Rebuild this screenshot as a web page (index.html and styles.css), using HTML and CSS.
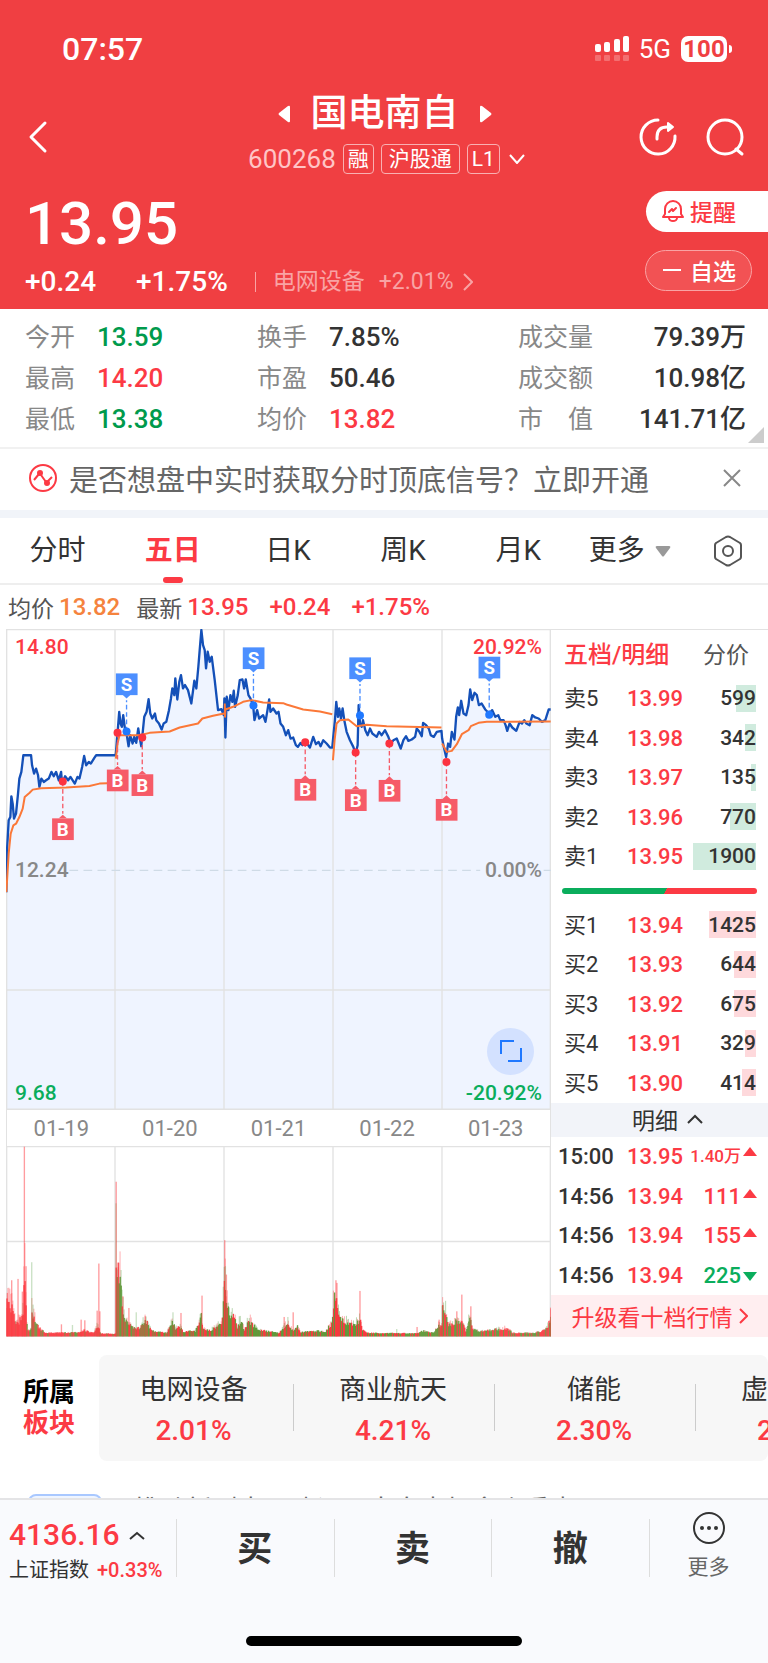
FILE: index.html
```html
<!DOCTYPE html>
<html lang="zh-CN">
<head>
    <meta charset="UTF-8">
    <meta name="viewport" content="width=device-width, initial-scale=1.0">
    <title>国电南自 600268</title>
    <link rel="stylesheet" href="styles.css">
</head>
<body>
    <header class="header">
        <div class="status-bar">
            <span class="time">07:57</span>
            <div class="status-icons">
                <svg width="34" height="26" viewBox="0 0 34 26" fill="#fff">
                    <rect x="0" y="8" width="6" height="8" rx="2"/>
                    <rect x="9" y="6" width="6" height="10" rx="2"/>
                    <rect x="19" y="3" width="6" height="13" rx="2"/>
                    <rect x="28" y="0" width="6" height="16" rx="2"/>
                    <g opacity=".25">
                        <rect x="0" y="19" width="6" height="6" rx="1"/>
                        <rect x="9" y="19" width="6" height="6" rx="1"/>
                        <rect x="19" y="19" width="6" height="6" rx="1"/>
                        <rect x="28" y="19" width="6" height="6" rx="1"/>
                    </g>
                </svg>
                <span class="network">5G</span>
                <span class="battery">100</span>
            </div>
        </div>

        <div class="title-bar">
            <button class="icon-btn back" aria-label="返回">
                <svg width="20" height="34" viewBox="0 0 20 34" fill="none" stroke="#fff" stroke-width="3" stroke-linecap="round" stroke-linejoin="round"><path d="M17 3L3 17l14 14"/></svg>
            </button>
            <div class="stock">
                <div class="stock-name">
                    <button class="icon-btn" aria-label="上一只">
                        <svg width="12" height="18" viewBox="0 0 12 18" fill="#fff"><path d="M10 1Q12 0 12 2v14q0 2-2 1L1 10Q0 9 1 8z"/></svg>
                    </button>
                    <h1>国电南自</h1>
                    <button class="icon-btn" aria-label="下一只">
                        <svg width="12" height="18" viewBox="0 0 12 18" fill="#fff"><path d="M2 1Q0 0 0 2v14q0 2 2 1l9-7q1-1 0-2z"/></svg>
                    </button>
                </div>
                <div class="stock-code">
                    <span class="code">600268</span>
                    <span class="tag">融</span>
                    <span class="tag">沪股通</span>
                    <span class="tag">L1</span>
                    <svg class="down" width="16" height="10" viewBox="0 0 16 10" fill="none" stroke="#fff" stroke-width="2"><path d="M1 1l7 8 7-8"/></svg>
                </div>
            </div>
            <div class="title-actions">
                <button class="icon-btn" aria-label="刷新">
                    <svg width="40" height="40" viewBox="0 0 40 40" fill="none" stroke="#fff" stroke-width="3" stroke-linecap="round" stroke-linejoin="round">
                        <path d="M20 3A17 17 0 1 0 37 19"/>
                        <path d="M19 22v-2q0-10 10-10h4"/>
                        <path d="M30 6l5 4-5 4z" fill="#fff" stroke-width="2"/>
                    </svg>
                </button>
                <button class="icon-btn" aria-label="搜索">
                    <svg width="40" height="40" viewBox="0 0 40 40" fill="none" stroke="#fff" stroke-width="3" stroke-linecap="round">
                        <circle cx="20" cy="20" r="17"/>
                        <path d="M31 32l6 5"/>
                    </svg>
                </button>
            </div>
        </div>

        <div class="price-bar">
            <div class="price-info">
                <div class="price">13.95</div>
                <div class="change">
                    <span>+0.24</span>
                    <span class="percent">+1.75%</span>
                    <a class="sector-link" href="#sectors">电网设备<span>+2.01%</span>
                        <svg width="10" height="18" viewBox="0 0 10 18" fill="none" stroke="currentColor" stroke-width="2"><path d="M1 1l8 8-8 8"/></svg>
                    </a>
                </div>
            </div>
            <div class="price-actions">
                <button class="remind">
                    <svg width="22" height="24" viewBox="0 0 22 24" fill="none" stroke="#fc3a44" stroke-width="2" stroke-linejoin="round" stroke-linecap="round">
                        <path d="M3 15v-5a8 8 0 0 1 16 0v5l2 3H1z"/>
                        <path d="M7 19a4 3 0 0 0 8 0M7 13l3-3 1 2 3-3"/>
                    </svg>
                    提醒
                </button>
                <button class="favorite"><i></i>自选</button>
            </div>
        </div>
    </header>

    <section class="stats">
        <dl>
            <div><dt>今开</dt><dd class="down-text">13.59</dd></div>
            <div><dt>最高</dt><dd class="up-text">14.20</dd></div>
            <div><dt>最低</dt><dd class="down-text">13.38</dd></div>
        </dl>
        <dl>
            <div><dt>换手</dt><dd>7.85%</dd></div>
            <div><dt>市盈</dt><dd>50.46</dd></div>
            <div><dt>均价</dt><dd class="up-text">13.82</dd></div>
        </dl>
        <dl class="wide">
            <div><dt>成交量</dt><dd>79.39万</dd></div>
            <div><dt>成交额</dt><dd>10.98亿</dd></div>
            <div><dt>市　值</dt><dd>141.71亿</dd></div>
        </dl>
    </section>

    <div class="notice">
        <svg width="28" height="28" viewBox="0 0 28 28" fill="none" stroke="#fc3a44" stroke-width="2">
            <circle cx="14" cy="14" r="13"/>
            <path d="M5 16l5-6M12 11l5 7M19 17l4-4"/>
            <circle cx="11" cy="9" r="2" fill="#fc3a44"/><circle cx="18" cy="19" r="2" fill="#fc3a44"/>
        </svg>
        <a href="#">是否想盘中实时获取分时顶底信号？立即开通</a>
        <button class="icon-btn" aria-label="关闭">
            <svg width="18" height="18" viewBox="0 0 18 18" stroke="#888" stroke-width="2"><path d="M1 1l16 16M17 1L1 17"/></svg>
        </button>
    </div>

    <nav class="tabs">
        <button>分时</button>
        <button class="active">五日</button>
        <button>日K</button>
        <button>周K</button>
        <button>月K</button>
        <button class="more">更多<svg width="16" height="12" viewBox="0 0 16 12" fill="#999"><path d="M2 1h12q2 0 1 2l-6 8q-1 1-2 0L1 3Q0 1 2 1z"/></svg></button>
        <button class="setting" aria-label="设置">
            <svg width="30" height="32" viewBox="0 0 30 32" fill="none" stroke="#555" stroke-width="2" stroke-linejoin="round">
                <path d="M13 2q2-1 4 0l10 6q1 1 1 2v12q0 1-1 2l-10 6q-2 1-4 0L3 24q-1-1-1-2V10q0-1 1-2z"/>
                <circle cx="15" cy="16" r="5"/>
            </svg>
        </button>
    </nav>

    <div class="quote-line">
        <span>均价</span><b class="avg">13.82</b>
        <span>最新</span><b>13.95</b><b>+0.24</b><b>+1.75%</b>
    </div>

    <main class="market">
        <section class="chart">
            <div class="price-chart">
                <svg id="priceChart" viewBox="0 0 1632 1440"></svg>
                <span class="label top-left up-text">14.80</span>
                <span class="label top-right up-text">20.92%</span>
                <span class="label mid-left">12.24</span>
                <span class="label mid-right">0.00%</span>
                <span class="label bottom-left green-text">9.68</span>
                <span class="label bottom-right green-text">-20.92%</span>
                <button class="fullscreen" aria-label="全屏">
                    <svg width="22" height="22" viewBox="0 0 22 22" fill="none" stroke="#1f78ff" stroke-width="2"><path d="M1 14V1h13M21 8v13H8"/></svg>
                </button>
            </div>
            <div class="dates">
                <span>01-19</span><span>01-20</span><span>01-21</span><span>01-22</span><span>01-23</span>
            </div>
            <svg id="volumeChart" viewBox="0 0 1632 573"></svg>
        </section>

        <aside class="order-book">
            <div class="book-tabs">
                <button class="active">五档/明细</button>
                <button>分价</button>
            </div>
            <table class="sell">
                <tr><th>卖5</th><td>13.99</td><td><i style="width:20px"></i><span>599</span></td></tr>
                <tr><th>卖4</th><td>13.98</td><td><i style="width:11px"></i><span>342</span></td></tr>
                <tr><th>卖3</th><td>13.97</td><td><i style="width:5px"></i><span>135</span></td></tr>
                <tr><th>卖2</th><td>13.96</td><td><i style="width:26px"></i><span>770</span></td></tr>
                <tr><th>卖1</th><td>13.95</td><td><i style="width:63px"></i><span>1900</span></td></tr>
            </table>
            <div class="ratio"><div></div></div>
            <table class="buy">
                <tr><th>买1</th><td>13.94</td><td><i style="width:47px"></i><span>1425</span></td></tr>
                <tr><th>买2</th><td>13.93</td><td><i style="width:22px"></i><span>644</span></td></tr>
                <tr><th>买3</th><td>13.92</td><td><i style="width:22px"></i><span>675</span></td></tr>
                <tr><th>买4</th><td>13.91</td><td><i style="width:11px"></i><span>329</span></td></tr>
                <tr><th>买5</th><td>13.90</td><td><i style="width:14px"></i><span>414</span></td></tr>
            </table>
            <button class="detail-title">明细
                <svg width="16" height="10" viewBox="0 0 16 10" fill="none" stroke="#333" stroke-width="2"><path d="M1 9l7-7 7 7"/></svg>
            </button>
            <table class="detail">
                <tr><th>15:00</th><td>13.95</td><td class="small">1.40万</td></tr>
                <tr><th>14:56</th><td>13.94</td><td>111</td></tr>
                <tr><th>14:56</th><td>13.94</td><td>155</td></tr>
                <tr><th>14:56</th><td>13.94</td><td class="fall">225</td></tr>
            </table>
            <a class="upgrade" href="#">升级看十档行情
                <svg width="9" height="16" viewBox="0 0 9 16" fill="none" stroke="#fc3a44" stroke-width="2"><path d="M1 1l7 7-7 7"/></svg>
            </a>
        </aside>
    </main>

    <section class="sectors" id="sectors">
        <h2>所属<span>板块</span></h2>
        <ul>
            <li><a href="#">电网设备<b>2.01%</b></a></li>
            <li><a href="#">商业航天<b>4.21%</b></a></li>
            <li><a href="#">储能<b>2.30%</b></a></li>
            <li><a href="#">虚拟电厂<b>2.16%</b></a></li>
        </ul>
    </section>

    <div class="news">
        <a href="#"><span class="news-tag"></span><span class="news-text">推动新型电网建设，南自中标多个重点项目</span></a>
    </div>

    <footer class="footer">
        <div class="trade-bar">
            <a class="index" href="#">
                <span class="index-value">4136.16
                    <svg width="16" height="9" viewBox="0 0 16 9" fill="none" stroke="#333" stroke-width="2"><path d="M1 8l7-6 7 6"/></svg>
                </span>
                <span class="index-name">上证指数<b>+0.33%</b></span>
            </a>
            <button>买</button>
            <button>卖</button>
            <button>撤</button>
            <button class="trade-more">
                <svg width="34" height="34" viewBox="0 0 34 34" fill="none" stroke="#333" stroke-width="2">
                    <circle cx="17" cy="17" r="15"/>
                    <g fill="#333" stroke="none"><circle cx="10" cy="17" r="2"/><circle cx="17" cy="17" r="2"/><circle cx="24" cy="17" r="2"/></g>
                </svg>
                更多
            </button>
        </div>
        <div class="home-bar"></div>
    </footer>

    <script src="chart.js"></script>
</body>
</html>
```
FILE: styles.css
```css
* {
    box-sizing: border-box;
}

body {
    margin: 0;
    background: #fff;
    color: #333;
    font-family: Roboto, "Noto Sans CJK SC", sans-serif;
    overflow-x: hidden;
}

h1, h2, ul, dl, dd {
    margin: 0;
    padding: 0;
}

button {
    padding: 0;
    border: none;
    background: none;
    color: inherit;
    font: inherit;
    cursor: pointer;
}

a {
    color: inherit;
    text-decoration: none;
}

svg {
    display: block;
    flex-shrink: 0;
}

.icon-btn {
    display: flex;
}

.up-text {
    color: #fc3a44;
}

.down-text {
    color: #009a4c;
}

.green-text {
    color: #0aad5c;
}

/* 顶部 */
.header {
    background: #f03f42;
    color: #fff;
    padding-bottom: 10px;
}

.status-bar {
    display: flex;
    justify-content: space-between;
    align-items: center;
    padding: 32px 36px 0 62px;
    height: 66px;
}

.time {
    font-size: 32px;
    font-weight: 500;
}

.status-icons {
    display: flex;
    align-items: center;
    gap: 10px;
}

.network {
    font-size: 26px;
    line-height: 30px;
}

.battery {
    position: relative;
    width: 46px;
    margin-right: 5px;
    border-radius: 7px;
    background: #fff;
    color: #f03f42;
    font-size: 24px;
    font-weight: 700;
    line-height: 26px;
    text-align: center;
}

.battery::after {
    content: "";
    position: absolute;
    right: -5px;
    top: 9px;
    width: 3px;
    height: 8px;
    border-radius: 0 4px 4px 0;
    background: #fff;
}

.title-bar {
    display: grid;
    grid-template-columns: 1fr auto 1fr;
    align-items: end;
    padding: 25px 23px 0 28px;
}

.title-actions {
    display: flex;
    justify-content: flex-end;
    gap: 27px;
    padding-bottom: 17px;
}

.back {
    padding-bottom: 20px;
}

.stock-name {
    display: flex;
    justify-content: center;
    align-items: center;
    gap: 21px;
    padding-right: 4px;
}

.stock-name h1 {
    font-size: 37px;
    font-weight: 500;
    line-height: 46px;
}

.stock-code {
    display: flex;
    align-items: center;
    justify-content: center;
    gap: 7px;
    margin-top: 7px;
}

.code {
    font-size: 26px;
    line-height: 30px;
    color: #ffc5c6;
}

.tag {
    padding: 0 4px;
    border: 1px solid #f9b0b2;
    border-radius: 4px;
    font-size: 21px;
    line-height: 28px;
}

.tag:nth-child(3) {
    padding: 0 7px;
}

.down {
    margin-left: 2px;
}

.price-bar {
    display: flex;
    justify-content: space-between;
    margin-top: 17px;
}

.price-info {
    padding-left: 25px;
}

.price {
    font-size: 60px;
    font-weight: 500;
    line-height: 66px;
}

.change {
    display: flex;
    align-items: center;
    margin-top: 8px;
    font-size: 28px;
    font-weight: 500;
    line-height: 34px;
}

.percent {
    margin-left: 40px;
}

.sector-link {
    display: flex;
    align-items: center;
    margin-left: 27px;
    padding-left: 18px;
    background: linear-gradient(#f9a3a4, #f9a3a4) left center / 1px 20px no-repeat;
    color: #f9a3a4;
    font-size: 23px;
    font-weight: 400;
}

.sector-link span {
    margin: 0 9px 0 14px;
}

.price-actions {
    display: flex;
    flex-direction: column;
    align-items: flex-end;
    gap: 18px;
}

.remind, .favorite {
    display: flex;
    align-items: center;
    height: 41px;
    padding-bottom: 1px;
    font-size: 23px;
    font-weight: 500;
}

.remind {
    gap: 6px;
    padding-left: 16px;
    padding-right: 32px;
    border-radius: 21px 0 0 21px;
    background: #fff;
    color: #fc3a44;
}

.favorite {
    gap: 9px;
    margin-right: 16px;
    padding-left: 17px;
    padding-right: 15px;
    border: 1px solid #f9a3a4;
    border-radius: 21px;
    background: #f25254;
}

.favorite i {
    width: 18px;
    height: 2px;
    background: #fff;
}

/* 行情数据 */
.stats {
    position: relative;
    display: grid;
    grid-template-columns: 232px 261px 1fr;
    padding: 8px 22px 7px 25px;
    border-bottom: 2px solid #f1f1f1;
}

.stats::after {
    content: "";
    position: absolute;
    right: 4px;
    bottom: 4px;
    border: 8px solid #ccc;
    border-top-color: transparent;
    border-left-color: transparent;
}

.stats dl div {
    display: flex;
    gap: 22px;
    line-height: 41px;
}

.stats dt {
    color: #888;
    font-size: 25px;
}

.stats dd {
    font-size: 26px;
    font-weight: 500;
}

.stats .wide div {
    justify-content: space-between;
}

.notice {
    display: flex;
    align-items: center;
    gap: 12px;
    padding: 0 27px 3px 29px;
    height: 69px;
    border-bottom: 8px solid #f1f4f9;
    color: #666;
    font-size: 29px;
}

.notice a {
    flex: 1;
}

/* 周期切换 */
.tabs {
    display: grid;
    grid-template-columns: repeat(5, 15%) 14% 1fr;
    align-items: center;
    justify-items: center;
    height: 67px;
    border-bottom: 2px solid #eee;
    font-size: 28px;
}

.tabs button {
    position: relative;
    line-height: 65px;
}

.tabs .active {
    color: #fc3a44;
    font-weight: 700;
}

.tabs .active::after {
    content: "";
    position: absolute;
    left: 50%;
    bottom: 0;
    width: 20px;
    height: 6px;
    margin-left: -10px;
    border-radius: 3px;
    background: #fc3a44;
}

.tabs .more {
    display: flex;
    align-items: center;
    gap: 10px;
}

.tabs .setting {
    padding-left: 4px;
}

.quote-line {
    display: flex;
    align-items: center;
    padding-left: 8px;
    height: 44px;
    font-size: 23px;
    color: #555;
}

.quote-line b {
    margin: 0 16px 0 5px;
    color: #fc3a44;
    font-size: 24px;
    font-weight: 500;
}

.quote-line .avg {
    color: #f5833e;
}

/* 走势图 */
.market {
    display: grid;
    grid-template-columns: 1fr 217px;
}

.chart {
    padding-left: 6px;
}

.chart svg {
    width: 100%;
}

.price-chart {
    position: relative;
}

.label {
    position: absolute;
    font-size: 21px;
    line-height: 26px;
    font-weight: 500;
}

.top-left, .bottom-left, .mid-left {
    left: 9px;
}

.top-right, .bottom-right, .mid-right {
    right: 9px;
}

.top-left, .top-right {
    top: 5px;
}

.bottom-left, .bottom-right {
    bottom: 4px;
}

.mid-left, .mid-right {
    top: 50%;
    margin-top: -12px;
    color: #888;
}

.price-chart .fullscreen {
    position: absolute;
    right: 17px;
    bottom: 35px;
    display: flex;
    align-items: center;
    justify-content: center;
    width: 47px;
    height: 47px;
    border-radius: 50%;
    background: #d3e1ff;
}

.fullscreen svg {
    width: 22px;
}

.dates {
    display: grid;
    grid-template-columns: repeat(5, 1fr);
    padding-top: 2px;
    border: solid #e2e2e2;
    border-width: 0 1px;
    color: #888;
    font-size: 22px;
    line-height: 34px;
    text-align: center;
}

.grid {
    fill: none;
    stroke: #e2e2e2;
    stroke-width: 4;
}

.base-line {
    stroke: #cfdbe6;
    stroke-width: 4;
    stroke-dasharray: 26 16;
}

.area {
    fill: #eff4ff;
}

.price-path, .avg-path {
    fill: none;
    stroke: #1450b8;
    stroke-width: 7;
    stroke-linejoin: round;
}

.avg-path {
    stroke: #fb7838;
    stroke-width: 6;
}

.marker text {
    fill: #fff;
    font-size: 56px;
    font-weight: 700;
    text-anchor: middle;
}

.marker line {
    stroke-width: 4;
    stroke-dasharray: 14 8;
}

.marker.b {
    fill: #f65b68;
}

.marker.s {
    fill: #4c8fff;
}

.marker.b line {
    stroke: #f65b68;
}

.marker.s line {
    stroke: #4c8fff;
}

.marker.b circle {
    fill: #fc3240;
}

.marker.s circle {
    fill: #1f78ff;
}

/* 五档盘口 */
.order-book {
    display: flex;
    flex-direction: column;
    border-top: 1px solid #e2e2e2;
}

.book-tabs {
    display: flex;
    align-items: center;
    justify-content: space-between;
    padding: 0 19px 4px 13px;
    height: 49px;
    color: #555;
    font-size: 23px;
}

.book-tabs .active {
    color: #fc3a44;
    font-size: 24px;
    font-weight: 500;
}

.order-book table {
    flex: 5 1 0;
    width: 100%;
    table-layout: fixed;
    border-collapse: collapse;
}

.order-book .detail {
    flex-grow: 4;
}

.order-book th, .order-book td {
    padding: 0;
    font-size: 22px;
    font-weight: 500;
    line-height: 27px;
}

.order-book th {
    width: 76px;
    padding-left: 13px;
    font-weight: 400;
    text-align: left;
}

.order-book td {
    color: #fc3a44;
}

.order-book td:nth-child(2) {
    width: 56px;
}

.order-book td:last-child {
    position: relative;
    padding-right: 12px;
    color: #333;
    font-size: 21px;
    text-align: right;
}

td i {
    position: absolute;
    right: 12px;
    top: 50%;
    height: 27px;
    margin-top: -14px;
}

td span {
    position: relative;
}

.sell i {
    background: #d0ebde;
}

.buy i {
    background: #fed9dc;
}

.ratio {
    padding: 11px 11px 12px;
}

.ratio div {
    height: 6px;
    border-radius: 3px;
    background: linear-gradient(120deg, #0aad5c 53%, #fc3a44 53%);
}

.detail-title {
    display: flex;
    align-items: center;
    justify-content: center;
    gap: 9px;
    height: 34px;
    padding: 0 0 2px 16px;
    background: #f2f4f9;
    font-size: 23px;
}

.order-book .detail th {
    padding-left: 7px;
    font-weight: 500;
}

.order-book .detail td:last-child {
    padding-right: 11px;
    color: #fc3a44;
    font-size: 22px;
    white-space: nowrap;
}

.order-book .detail td.fall:last-child {
    color: #0aad5c;
}

.order-book .detail td.small:last-child {
    font-size: 17px;
}

.detail td:last-child::after {
    content: "";
    display: inline-block;
    margin-left: 2px;
    border: solid transparent;
    border-width: 0 7px 9px;
    border-bottom-color: currentColor;
    vertical-align: 6px;
}

.detail td.fall:last-child::after {
    border-width: 9px 7px 0;
    border-top-color: currentColor;
    vertical-align: 2px;
}

.upgrade {
    display: flex;
    align-items: center;
    justify-content: center;
    gap: 6px;
    height: 42px;
    background: #ffeef0;
    color: #fc3a44;
    font-size: 23px;
}

/* 所属板块 */
.sectors {
    display: flex;
    align-items: center;
    margin-top: 18px;
}

.sectors h2 {
    flex: 0 0 99px;
    padding-left: 23px;
    color: #000;
    font-size: 26px;
    font-weight: 700;
    line-height: 31px;
}

.sectors h2 span {
    display: block;
    color: #fc3a44;
}

.sectors ul {
    flex: 1;
    display: flex;
    min-width: 0;
    overflow: hidden;
    border-radius: 8px;
    background: #f7f7f7;
    list-style: none;
}

.sectors li {
    flex: 0 0 201px;
    padding: 15px 3px 10px 0;
    background: linear-gradient(#ccc, #ccc) right 29px / 1px 47px no-repeat;
    font-size: 27px;
    line-height: 40px;
    text-align: center;
}

.sectors li:first-child {
    flex-basis: 195px;
    padding-right: 6px;
}

.sectors b {
    display: block;
    color: #fc3a44;
    font-size: 28px;
    font-weight: 500;
    line-height: 41px;
}

.news {
    height: 37px;
    padding: 33px 28px 0;
    overflow: hidden;
}

.news a {
    display: flex;
    gap: 32px;
    color: #666;
    font-size: 26px;
    line-height: 33px;
}

.news-tag {
    width: 74px;
    height: 36px;
    border: 2px solid #a9c8ff;
    border-radius: 8px;
    background: #eff5ff;
}

/* 底部交易栏 */
.footer {
    padding-bottom: 17px;
    border-top: 2px solid #e4e4e6;
    background: #f9fafd;
}

.trade-bar {
    display: grid;
    grid-template-columns: 176px 1fr 1fr 1fr 119px;
    align-items: center;
    padding-top: 11px;
}

.trade-bar > button {
    height: 76px;
    padding-bottom: 8px;
    background: linear-gradient(#ddd, #ddd) left 8px / 1px 58px no-repeat;
    font-size: 35px;
    font-weight: 700;
}

.index {
    padding: 4px 0 0 9px;
}

.index-value {
    display: flex;
    align-items: center;
    gap: 9px;
    color: #fc3a44;
    font-size: 30px;
    font-weight: 500;
    line-height: 38px;
}

.index-name {
    display: block;
    font-size: 20px;
    line-height: 32px;
    white-space: nowrap;
}

.index-name b {
    margin-left: 8px;
    color: #fc3a44;
    font-weight: 500;
}

.trade-bar .trade-more {
    display: flex;
    flex-direction: column;
    align-items: center;
    gap: 4px;
    padding: 0 0 2px;
    color: #666;
    font-size: 21px;
    font-weight: 400;
    line-height: 36px;
}

.home-bar {
    width: 36%;
    height: 10px;
    margin: 49px auto 0;
    border-radius: 5px;
    background: #000;
}
```
FILE: chart.js
```js
const dayWidth = 326.4;

// 五日价格走势
const priceLine = '1,788 3,663 8,573 13,563 16,501 20,523 24,568 30,553 36,493 40,448 46,428 52,378 75,378 78,408 84,433 90,418 96,438 100,473 106,448 113,458 120,453 128,448 136,428 143,441 150,428 158,453 165,428 168,463 177,441 186,453 193,443 206,463 214,443 220,448 228,413 234,380 240,408 248,398 254,403 265,385 270,378 327,378 ' +
    '329,373 334,311 339,248 343,283 347,293 351,258 356,298 361,313 367,351 372,318 379,343 384,323 390,341 396,298 400,323 405,351 408,323 414,263 421,248 427,210 432,253 438,268 446,253 450,273 458,283 466,301 472,283 480,278 488,243 494,208 498,178 504,198 507,148 513,211 519,158 524,138 530,178 536,168 545,183 555,223 564,155 570,178 576,113 580,63 585,3 590,48 595,63 599,118 604,68 610,98 616,83 625,153 635,243 645,240 652,258 ' +
    '654,208 657,325 661,203 666,243 672,198 678,218 682,185 686,233 694,198 700,153 708,151 713,178 718,151 726,198 732,208 740,228 744,273 752,243 758,268 770,258 777,278 783,243 788,211 792,248 800,238 810,253 816,248 822,283 830,293 838,318 845,303 852,328 860,325 868,348 874,353 882,341 888,348 896,333 903,345 910,355 920,323 928,345 936,338 942,351 950,333 960,343 970,355 977,355 ' +
    '980,323 985,273 989,218 994,263 998,238 1003,268 1008,238 1013,273 1020,308 1030,333 1040,353 1047,373 1053,348 1056,228 1060,283 1065,293 1069,273 1076,303 1083,318 1090,298 1097,313 1110,323 1117,308 1125,318 1135,303 1145,323 1152,343 1160,333 1170,328 1182,358 1190,333 1198,321 1205,335 1215,331 1225,323 1230,298 1238,308 1245,321 1249,281 1258,288 1266,298 1272,318 1281,323 1290,308 1304,305 ' +
    '1306,328 1311,353 1318,383 1324,343 1330,353 1335,308 1343,331 1348,263 1353,235 1357,258 1363,215 1370,253 1378,258 1385,228 1390,181 1396,213 1403,191 1410,198 1416,228 1424,223 1435,241 1447,253 1456,243 1465,263 1474,258 1480,273 1490,273 1496,288 1501,305 1508,283 1516,295 1528,305 1538,278 1545,283 1552,273 1558,283 1568,288 1576,258 1585,265 1595,268 1605,278 1615,273 1625,241 1631,241';

// 每日均价线
const avgLines = [
    'M1 788L8 673 14 613 22 588 30 583 40 563 50 538 56 503 70 491 80 481 105 477 180 475 250 470 280 463 326 461',
    'M329 388L334 343 340 318 360 318 400 318 430 311 490 307 520 295 575 283 588 268 620 260 653 253',
    'M655 223L656 263 657 241 680 233 710 218 735 213 770 220 830 222 840 226 890 241 940 247 977 255',
    'M979 393L984 333 990 283 1000 273 1025 271 1050 291 1080 287 1140 291 1304 295',
    'M1306 343L1320 368 1335 365 1350 345 1365 315 1385 303 1392 291 1415 281 1440 278 1631 277'
];

// 买卖点: 类型, x, 圆点 y, 方框 y
const markers = [
    ['B', 170, 457, 567], ['B', 334, 311, 421], ['B', 408, 325, 435],
    ['B', 896, 339, 449], ['B', 1047, 370, 480], ['B', 1148, 343, 452], ['B', 1319, 398, 509],
    ['S', 361, 307, 133], ['S', 741, 229, 55], ['S', 1060, 259, 85], ['S', 1447, 257, 83]
];

// 成交量包络: x, 高度
const volume = [
    [0, 110], [5, 125], [15, 105], [22, 65], [30, 40], [40, 55], [50, 80], [53, 238], [56, 200], [60, 40], [65, 15], [73, 20], [76, 95], [90, 35], [100, 25], [115, 8], [220, 10], [230, 18], [260, 8], [272, 35], [282, 6], [326, 5],
    [328, 296], [333, 235], [340, 200], [346, 120], [352, 65], [360, 45], [380, 28], [400, 25], [415, 55], [425, 35], [435, 15], [480, 8], [495, 50], [505, 25], [520, 30], [530, 12], [565, 15], [575, 40], [583, 85], [588, 22], [610, 18], [630, 30], [645, 45],
    [653, 200], [660, 130], [666, 65], [682, 75], [690, 25], [700, 55], [712, 20], [726, 55], [740, 35], [755, 20], [775, 15], [815, 8], [840, 40], [860, 15], [872, 32], [880, 10], [930, 15], [955, 12], [970, 40], [978, 60],
    [980, 150], [988, 120], [995, 65], [1010, 50], [1040, 35], [1058, 60], [1066, 20], [1080, 8], [1230, 6], [1247, 15], [1280, 10], [1295, 35], [1303, 30],
    [1305, 95], [1315, 80], [1322, 40], [1335, 35], [1350, 55], [1365, 45], [1375, 15], [1388, 65], [1395, 22], [1420, 14], [1500, 25], [1515, 8], [1580, 8], [1605, 15], [1620, 28], [1632, 85]
];

// 单笔放量
const spikes = [
    [2, 130, 1], [15, 168, 1], [34, 172, 1], [47, 134, 1], [53, 568, 1], [58, 210, 1], [75, 222, 0], [79, 95, 0], [164, 36, 1], [197, 34, 0], [223, 50, 1], [234, 48, 1], [271, 77, 1], [276, 218, 1], [279, 75, 1],
    [328, 463, 1], [348, 120, 1], [366, 85, 1], [388, 72, 0], [415, 60, 1], [498, 72, 0], [522, 70, 1], [585, 122, 1],
    [653, 288, 1], [655, 210, 0], [658, 185, 1], [831, 58, 1], [842, 58, 0], [858, 72, 1],
    [986, 168, 1], [989, 160, 1], [1058, 136, 1], [1168, 22, 0], [1229, 28, 1], [1295, 50, 1],
    [1304, 92, 0], [1348, 75, 1], [1363, 125, 1], [1390, 90, 1], [1629, 86, 1]
];

function verticals(height) {
    let d = '';
    for (let i = 0; i <= 5; i++) {
        const x = Math.min(Math.max(i * dayWidth, 2), 1630);
        d += `M${x} 0V${height}`;
    }
    return d;
}

function drawPrice() {
    let html = `<polygon class="area" points="1,1440 ${priceLine} 1631,1440"/>`;
    html += `<path class="grid" d="M0 2H1632M0 361H1632M0 1081H1632M0 1438H1632${verticals(1440)}"/>`;
    html += '<path class="base-line" d="M190 723H1420M1610 723H1632"/>';
    html += `<polyline class="price-path" points="${priceLine}"/>`;
    html += `<path class="avg-path" d="${avgLines.join('')}"/>`;
    markers.forEach(([type, x, dot, box]) => {
        const sell = type === 'S';
        const tip = sell ? `M${x - 12} ${box + 64}h24l-12 11z` : `M${x - 12} ${box}h24l-12-11z`;
        html += `<g class="marker ${type.toLowerCase()}">
            <line x1="${x}" y1="${dot}" x2="${x}" y2="${sell ? box + 80 : box - 14}"/>
            <circle cx="${x}" cy="${dot}" r="12"/>
            <rect x="${x - 32}" y="${box}" width="65" height="65"/>
            <path d="${tip}"/>
            <text x="${x}" y="${box + 52}">${type}</text></g>`;
    });
    document.getElementById('priceChart').innerHTML = html;
}

function drawVolume() {
    const base = 570;
    let seed = 7;
    const random = () => (seed = (seed * 16807) % 2147483647) / 2147483647;
    let html = `<path class="grid" d="M0 2H1632M0 286H1632M0 571H1632${verticals(573)}"/>`;
    let k = 0;
    for (let x = 1; x < 1631; x += 3) {
        while (k < volume.length - 2 && volume[k + 1][0] <= x) k++;
        const [x1, h1] = volume[k];
        const [x2, h2] = volume[k + 1];
        const top = h1 + (h2 - h1) * Math.min((x - x1) / (x2 - x1), 1);
        const redRate = x < 326 ? 0.8 : 0.5;
        const high = top * (0.75 + random() * 0.6);
        const low = top * (0.6 + random() * 0.4) + 4;
        const red = random() < redRate;
        html += `<rect x="${x}" y="${base - high}" width="3" height="${high}" fill="${red ? '#ff3a40' : '#4f9a3a'}" opacity=".4"/>`;
        html += `<rect x="${x}" y="${base - low}" width="4" height="${low}" fill="${random() < redRate ? '#fa3038' : '#5a9632'}" opacity=".9"/>`;
    }
    spikes.forEach(([x, h, up]) => {
        html += `<rect x="${x}" y="${base - h}" width="4" height="${h}" fill="${up ? '#ff3a40' : '#4f9a3a'}" opacity="${up ? .5 : .3}"/>`;
    });
    document.getElementById('volumeChart').innerHTML = html;
}

drawPrice();
drawVolume();
```
